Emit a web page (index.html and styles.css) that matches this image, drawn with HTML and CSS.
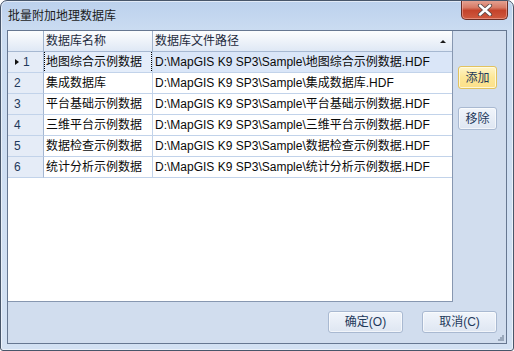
FILE: index.html
```html
<!DOCTYPE html>
<html>
<head>
<meta charset="utf-8">
<link rel="stylesheet" href="styles.css">
</head>
<body>
<div class="window">
  <div class="titlebar">
    <div class="title">批量附加地理数据库</div>
    <div class="close">
      <svg width="16" height="12" viewBox="0 0 16 12">
        <path d="M3 1.5 L13 10.5 M13 1.5 L3 10.5" stroke="#5a4a48" stroke-width="4.2" stroke-linecap="round"/>
        <path d="M3 1.5 L13 10.5 M13 1.5 L3 10.5" stroke="#ffffff" stroke-width="2.4" stroke-linecap="round"/>
      </svg>
    </div>
  </div>
  <div class="client">
    <div class="main">
      <div class="grid">
        <div class="hcell c0"></div>
        <div class="hcell c1">数据库名称</div>
        <div class="hcell c2">数据库文件路径<span class="sort"></span></div>

        <div class="cell rh sel"><span class="mark"></span>1</div>
        <div class="cell c1 sel focus">地图综合示例数据</div>
        <div class="cell c2 sel">D:\MapGIS K9 SP3\Sample\地图综合示例数据.HDF</div>

        <div class="cell rh">2</div>
        <div class="cell c1">集成数据库</div>
        <div class="cell c2">D:\MapGIS K9 SP3\Sample\集成数据库.HDF</div>

        <div class="cell rh">3</div>
        <div class="cell c1">平台基础示例数据</div>
        <div class="cell c2">D:\MapGIS K9 SP3\Sample\平台基础示例数据.HDF</div>

        <div class="cell rh">4</div>
        <div class="cell c1">三维平台示例数据</div>
        <div class="cell c2">D:\MapGIS K9 SP3\Sample\三维平台示例数据.HDF</div>

        <div class="cell rh">5</div>
        <div class="cell c1">数据检查示例数据</div>
        <div class="cell c2">D:\MapGIS K9 SP3\Sample\数据检查示例数据.HDF</div>

        <div class="cell rh">6</div>
        <div class="cell c1">统计分析示例数据</div>
        <div class="cell c2">D:\MapGIS K9 SP3\Sample\统计分析示例数据.HDF</div>
      </div>
      <div class="side">
        <div class="btn small hot">添加</div>
        <div class="btn small">移除</div>
      </div>
    </div>
    <div class="footer">
      <div class="btn wide">确定(O)</div>
      <div class="btn wide">取消(C)</div>
    </div>
    <svg class="grip" width="6" height="6" viewBox="0 0 6 6">
      <rect x="4" y="0" width="2" height="2" fill="#9aa8bb"/>
      <rect x="2" y="2" width="2" height="2" fill="#9aa8bb"/>
      <rect x="4" y="2" width="2" height="2" fill="#9aa8bb"/>
      <rect x="0" y="4" width="2" height="2" fill="#9aa8bb"/>
      <rect x="2" y="4" width="2" height="2" fill="#9aa8bb"/>
      <rect x="4" y="4" width="2" height="2" fill="#9aa8bb"/>
    </svg>
  </div>
</div>
</body>
</html>
```
FILE: styles.css
```css
html, body {
  margin: 0;
  padding: 0;
  background: #ffffff;
}
body {
  font-family: "Liberation Sans", "Noto Sans CJK SC", sans-serif;
  font-size: 12px;
}
.window {
  width: 514px;
  height: 351px;
  box-sizing: border-box;
  border: 1px solid #48566a;
  border-radius: 7px 7px 3px 3px;
  background: linear-gradient(#bcd1ed 0px, #cbdcf1 30px, #d3e1f3 100%);
  box-shadow: inset 0 0 0 1px rgba(255, 255, 255, 0.55);
  display: flex;
  flex-direction: column;
  overflow: hidden;
}
.titlebar {
  height: 29px;
  flex: none;
  display: flex;
  align-items: flex-start;
  padding-left: 7px;
}
.title {
  margin-top: 7px;
  line-height: 16px;
  color: #1b1b1b;
}
.close {
  margin: -1px 5px 0 auto;
  width: 45px;
  height: 19px;
  border: 1px solid #6a2d24;
  border-top: none;
  border-radius: 0 0 5px 5px;
  background: linear-gradient(#e6a697 0%, #d77a65 40%, #c4432b 55%, #cf5a3f 100%);
  box-shadow: inset 0 0 0 1px rgba(255, 200, 190, 0.45);
  display: flex;
  align-items: center;
  justify-content: center;
}
.close svg {
  display: block;
}
.client {
  flex: 1;
  margin: 0 6px 6px 6px;
  border: 1px solid #667791;
  background: #d1ddee;
  display: flex;
  flex-direction: column;
  position: relative;
}
.main {
  display: flex;
  height: 271px;
  flex: none;
}
.grid {
  width: 445px;
  height: 271px;
  box-sizing: border-box;
  background: #ffffff;
  border-right: 1px solid #8797b0;
  border-bottom: 1px solid #8797b0;
  display: grid;
  grid-template-columns: 36px 109px 299px;
  grid-auto-rows: 21px;
  align-content: start;
}
.hcell, .cell {
  box-sizing: border-box;
  display: flex;
  align-items: center;
  white-space: nowrap;
  overflow: hidden;
  line-height: 16px;
}
.hcell {
  background: linear-gradient(#fcfdfe, #dfe8f5);
  border-bottom: 1px solid #a6b8d1;
  color: #1e2b3d;
  padding-left: 2px;
}
.hcell.c0, .hcell.c1 {
  border-right: 1px solid #a1b3cc;
}
.sort {
  margin-left: auto;
  margin-right: 6px;
  width: 0;
  height: 0;
  border-left: 3px solid transparent;
  border-right: 3px solid transparent;
  border-bottom: 3px solid #1a1a1a;
}
.cell {
  border-bottom: 1px solid #c2d3ea;
  color: #0a0a0a;
  padding-left: 2px;
}
.cell.rh {
  background: #e5ecf7;
  border-right: 1px solid #a4b7d2;
  color: #1e395b;
  padding-left: 6px;
}
.cell.c1 {
  border-right: 1px solid #c2d3ea;
}
.cell.c1.sel {
  background: #e4edfa;
}
.cell.c2.sel {
  background: #dae6f8;
}
.mark {
  width: 0;
  height: 0;
  margin-left: 1px;
  margin-right: 4px;
  border-top: 3.5px solid transparent;
  border-bottom: 3.5px solid transparent;
  border-left: 4px solid #111111;
}
.focus {
  position: relative;
}
.focus::after {
  content: "";
  position: absolute;
  top: -1px;
  left: 0;
  right: 0;
  bottom: -1px;
  border: 1px dotted #000000;
}
.side {
  display: flex;
  flex-direction: column;
  gap: 18px;
  padding: 35px 0 0 5px;
}
.btn {
  box-sizing: border-box;
  border: 1px solid #a9b9d1;
  border-radius: 3px;
  background: linear-gradient(#f1f5fb, #dee6f2);
  box-shadow: inset 0 0 0 1px rgba(255, 255, 255, 0.6);
  color: #1e395b;
  display: flex;
  align-items: center;
  justify-content: center;
  line-height: 16px;
}
.btn.small {
  width: 39px;
  height: 23px;
}
.btn.hot {
  border-color: #e2c25e;
  background: linear-gradient(#fff5c9, #fde796 50%, #fce08a);
  box-shadow: inset 0 0 0 1px rgba(255, 252, 230, 0.8);
}
.footer {
  flex: 1;
  display: flex;
  justify-content: flex-end;
  align-items: flex-start;
  gap: 19px;
  padding: 9px 9px 0 0;
}
.btn.wide {
  width: 75px;
  height: 22px;
}
.grip {
  position: absolute;
  right: 2px;
  bottom: 2px;
}
```
